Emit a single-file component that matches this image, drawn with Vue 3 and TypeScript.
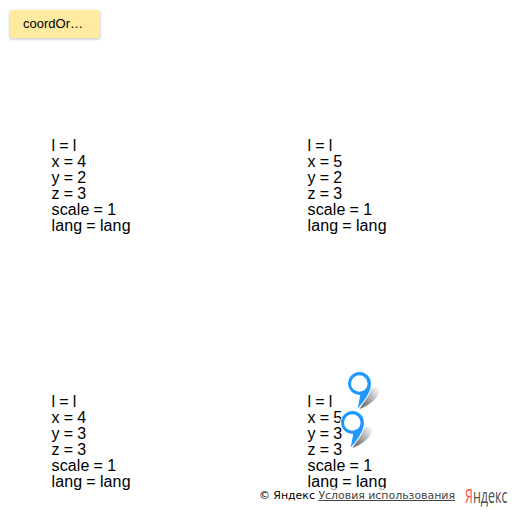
<script setup lang="ts">
interface Tile { x: number; y: number }
interface Pin { id: number; left: number; top: number }

const tiles: Tile[] = [
  { x: 4, y: 2 },
  { x: 5, y: 2 },
  { x: 4, y: 3 },
  { x: 5, y: 3 },
]
const pins: Pin[] = [
  { id: 1, left: 345, top: 369 },
  { id: 2, left: 338, top: 408 },
]
</script>

<template>
  <main class="map">
    <div class="tiles">
      <div v-for="tile in tiles" :key="`${tile.x}-${tile.y}`" class="tile">
        <div>l = l</div>
        <div>x = {{ tile.x }}</div>
        <div>y = {{ tile.y }}</div>
        <div>z = 3</div>
        <div>scale = 1</div>
        <div>lang = lang</div>
      </div>
    </div>

    <svg
      v-for="pin in pins"
      :key="pin.id"
      class="pin"
      :style="{ left: `${pin.left}px`, top: `${pin.top}px` }"
      width="37"
      height="42"
      viewBox="0 0 37 42"
    >
      <defs>
        <linearGradient :id="`shade-${pin.id}`" gradientUnits="userSpaceOnUse" x1="18" y1="33" x2="33" y2="21">
          <stop offset="0" stop-color="#000" stop-opacity="0.5" />
          <stop offset="1" stop-color="#000" stop-opacity="0.05" />
        </linearGradient>
      </defs>
      <path d="M14.5 40C22.5 37.5 34.5 29 34.8 20.5C33.5 17.5 29 18 24.5 20.5Z" :fill="`url(#shade-${pin.id})`" />
      <path
        d="M14.3 2.9A11.6 11.6 0 1 0 15.2 26.1C14.9 29.5 13.4 34.5 12.8 39.6C18.5 32 25.9 24.5 25.9 14.5A11.6 11.6 0 0 0 14.3 2.9Z"
        fill="#1e98ff"
        stroke="#fff"
        stroke-width="2"
        paint-order="stroke"
      />
      <circle cx="14.3" cy="14.5" r="8.3" fill="#fff" />
    </svg>

    <button class="control" type="button"><span>coordOrder</span></button>

    <footer class="copyright">
      <div class="legal">© Яндекс <a>Условия использования</a></div>
      <svg class="logo" width="44" height="28" viewBox="0 0 44 28">
        <text x="0" y="21" textLength="42.4" lengthAdjust="spacingAndGlyphs"><tspan class="first">Я</tspan>ндекс</text>
      </svg>
    </footer>
  </main>
</template>

<style>
body { background: #fff; overflow: hidden; }
</style>

<style scoped>
.map {
  position: relative;
  width: 512px;
  height: 512px;
  overflow: hidden;
  font-family: "Liberation Sans", Arial, sans-serif;
}
.tiles {
  display: grid;
  grid-template-columns: repeat(2, 256px);
  grid-template-rows: repeat(2, 256px);
}
.tile {
  box-sizing: border-box;
  padding: 138px 0 0 51.5px;
  font-size: 16px;
  line-height: 16px;
  letter-spacing: 0.13px;
  word-spacing: -0.5px;
  color: #000;
}
.pin { position: absolute; }
.control {
  position: absolute;
  left: 10px;
  top: 10px;
  box-sizing: border-box;
  width: 90px;
  height: 28px;
  padding: 0 13px;
  border: 0;
  border-radius: 3px;
  background: #ffeba0;
  box-shadow: 0 1px 2px 1px rgba(0, 0, 0, 0.15);
  font: 13px/28px "Liberation Sans", Arial, sans-serif;
  color: #000;
  text-align: left;
}
.control span {
  display: block;
  overflow: hidden;
  text-overflow: ellipsis;
  white-space: nowrap;
}
.copyright {
  position: absolute;
  right: 3px;
  bottom: 2px;
  display: flex;
  align-items: flex-end;
  gap: 8px;
}
.legal {
  margin-bottom: 7px;
  padding: 0 2px 0 3px;
  background: rgba(255, 255, 255, 0.7);
  font: 11px/15px "DejaVu Sans", Verdana, sans-serif;
  letter-spacing: -0.05px;
  white-space: nowrap;
  color: #000;
}
.legal a { color: #444; text-decoration: underline; }
.logo { display: block; overflow: visible; }
.logo text {
  font: 500 20px "Open Sans", sans-serif;
  fill: #4d4d4d;
}
.logo .first { fill: #ff4b4b; }
</style>
